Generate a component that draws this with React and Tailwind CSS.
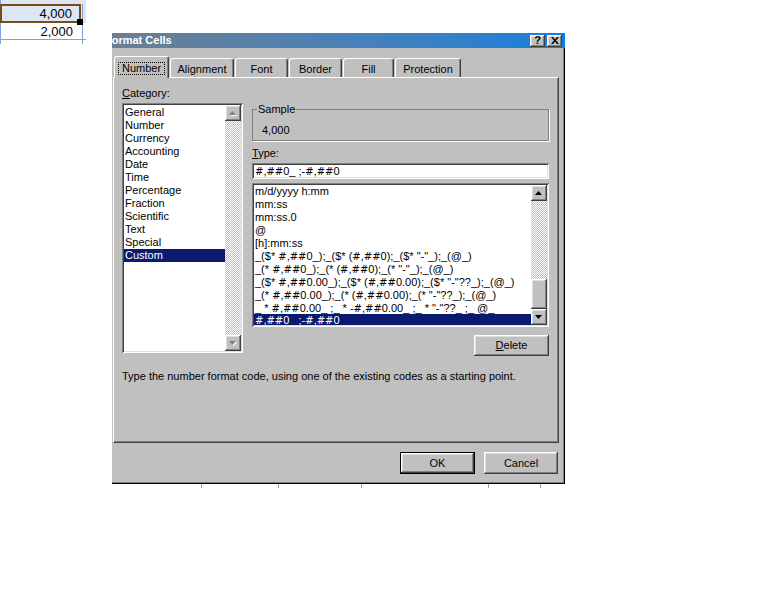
import React from "react";

const raised =
  "shadow-[inset_-1px_-1px_#404040,inset_1px_1px_#ffffff,inset_-2px_-2px_#808080,inset_2px_2px_#dfdfdf]";
const sunken =
  "shadow-[inset_1px_1px_#808080,inset_-1px_-1px_#ffffff,inset_2px_2px_#404040,inset_-2px_-2px_#dfdfdf]";
const dither =
  "bg-[image:repeating-conic-gradient(#c0c0c0_0_25%,#ffffff_0_50%)] bg-[length:2px_2px]";

const categories = [
  "General",
  "Number",
  "Currency",
  "Accounting",
  "Date",
  "Time",
  "Percentage",
  "Fraction",
  "Scientific",
  "Text",
  "Special",
  "Custom",
];

const formats = [
  "m/d/yyyy h:mm",
  "mm:ss",
  "mm:ss.0",
  "@",
  "[h]:mm:ss",
  '_($* #,##0_);_($* (#,##0);_($* "-"_);_(@_)',
  '_(* #,##0_);_(* (#,##0);_(* "-"_);_(@_)',
  '_($* #,##0.00_);_($* (#,##0.00);_($* "-"??_);_(@_)',
  '_(* #,##0.00_);_(* (#,##0.00);_(* "-"??_);_(@_)',
  '_ * #,##0.00_ ;_ * -#,##0.00_ ;_ * "-"??_ ;_ @_ ',
  "#,##0_ ;-#,##0",
];

// the # sign is narrow in Liberation Sans, the dialog font draws it wider
function Code({ text }) {
  const parts = text.split("#");
  return (
    <>
      {parts.map((p, i) => (
        <React.Fragment key={i}>
          {p}
          {i < parts.length - 1 && <span className="font-['DejaVu_Sans'] text-[10px]">#</span>}
        </React.Fragment>
      ))}
    </>
  );
}

function ArrowBtn({ up, disabled }) {
  return (
    <div className={`w-[16px] h-[16px] bg-[#c0c0c0] flex items-center justify-center ${raised}`}>
      <svg width="8" height="5" viewBox="0 0 8 5">
        {disabled && (
          <polygon points={up ? "4.5,1 8,5 1,5" : "1,1 8,1 4.5,5"} fill="#ffffff" />
        )}
        <polygon points={up ? "3.5,0 7,4 0,4" : "0,0 7,0 3.5,4"} fill={disabled ? "#808080" : "#000000"} />
      </svg>
    </div>
  );
}

function Tab({ label, w, active }) {
  return (
    <div
      className={`ml-[1px] first:ml-0 flex justify-center bg-[#c0c0c0] border-l border-t border-white border-r border-r-[#404040] rounded-t-[3px] shadow-[inset_-1px_0_#808080] ${
        active ? "relative z-10 h-[22px] -mb-[1px] pt-[5px]" : "h-[19px] pt-[4px]"
      }`}
      style={{ width: w }}
    >
      {active ? (
        <span className="h-[13px] border border-dotted border-black px-[3px] flex items-center">{label}</span>
      ) : (
        <span>{label}</span>
      )}
    </div>
  );
}

function Sheet() {
  return (
    <div className="w-[86px] font-['Liberation_Sans',Arial,sans-serif] text-[13px] leading-[15px]">
      <div className="h-[4px] bg-[#dce6f4] border-l border-[#7ea3d8]" />
      <div className="flex h-[19px] bg-[#dce6f4]">
        <div className="relative w-[81px] border-2 border-[#7a4c16] flex items-end justify-end pr-[7px]">
          4,000
          <span className="absolute -right-[4px] -bottom-[4px] w-[6px] h-[6px] bg-black" />
        </div>
        <div className="w-[1px] ml-[1px] bg-[#7ea3d8]" />
      </div>
      <div className="flex h-[17px] border-b border-[#7ea3d8]">
        <div className="w-[82px] border-l border-[#7ea3d8] flex justify-end pr-[9px] pt-[1px]">2,000</div>
        <div className="w-[1px] bg-[#7ea3d8]" />
      </div>
      <div className="flex h-[4px]">
        <div className="w-[82px] border-l border-[#7ea3d8]" />
        <div className="w-[1px] bg-[#7ea3d8]" />
      </div>
    </div>
  );
}

function Dialog() {
  return (
    <div className="absolute left-[112px] top-[33px] w-[453px] h-[451px] bg-[#c0c0c0] flex flex-col shadow-[inset_-1px_-1px_#000000,inset_-2px_-2px_#808080]">
      {/* Title bar */}
      <div className="h-[15px] flex items-center overflow-hidden bg-linear-to-r from-[#6a7f91] to-[#0d7fdc]">
        <span className="-ml-[7px] font-bold text-white whitespace-nowrap">Format Cells</span>
        <div className="ml-auto mr-[3px] flex gap-[2px]">
          <div className={`w-[15px] h-[12px] bg-[#c0c0c0] flex items-center justify-center font-bold text-[11px] leading-[11px] ${raised}`}>
            ?
          </div>
          <div className={`w-[15px] h-[12px] bg-[#c0c0c0] flex items-center justify-center ${raised}`}>
            <svg width="8" height="7" viewBox="0 0 8 7">
              <path d="M0 0h2l2 2.5L6 0h2L5 3.5 8 7H6L4 4.5 2 7H0l3-3.5z" fill="#000" />
            </svg>
          </div>
        </div>
      </div>

      {/* Tabs */}
      <div className="mt-[8px] pl-[2px] h-[21px] flex items-end">
        <Tab label="Number" w={55} active />
        <Tab label="Alignment" w={64} />
        <Tab label="Font" w={53} />
        <Tab label="Border" w={53} />
        <Tab label="Fill" w={51} />
        <Tab label="Protection" w={66} />
      </div>

      {/* Panel */}
      <div className="ml-[1px] w-[446px] h-[366px] border-t border-l border-white border-r border-b border-r-[#404040] border-b-[#404040] shadow-[inset_-1px_-1px_#808080] px-[8px] pt-[9px]">
        <div className="flex">
          {/* Category column */}
          <div className="w-[121px] flex flex-col">
            <div>
              <span className="underline">C</span>ategory:
            </div>
            <div className={`mt-[3px] h-[250px] bg-white p-[2px] flex ${sunken}`}>
              <div className="flex-1 pt-[1px]">
                {categories.map((c) => (
                  <div
                    key={c}
                    className={`h-[13px] pl-[1px] ${c === "Custom" ? "bg-[#0a1a6e] text-white" : ""}`}
                  >
                    {c}
                  </div>
                ))}
              </div>
              <div className="w-[16px] flex flex-col">
                <ArrowBtn up disabled />
                <div className={`flex-1 ${dither}`} />
                <ArrowBtn disabled />
              </div>
            </div>
          </div>

          {/* Right column */}
          <div className="ml-[9px] w-[297px] flex flex-col">
            <fieldset className="mt-[16px] border border-[#808080] shadow-[1px_1px_#ffffff] pb-[3px]">
              <legend className="ml-[4px] px-[1px]">Sample</legend>
              <div className="pl-[9px] pt-[8px]">4,000</div>
            </fieldset>
            <div className="mt-[6px]">
              <span className="underline">T</span>ype:
            </div>
            <div className={`mt-[3px] h-[16px] bg-white flex items-center pl-[3px] whitespace-pre ${sunken}`}>
              <Code text="#,##0_ ;-#,##0" />
            </div>
            <div className={`mt-[4px] h-[144px] bg-white p-[2px] flex ${sunken}`}>
              <div className="flex-1 overflow-hidden">
                {formats.map((f, i) => (
                  <div
                    key={i}
                    className={`pl-[1px] whitespace-pre overflow-hidden ${
                      i === formats.length - 1
                        ? "h-[13px] bg-[#0a1a6e] text-white"
                        : i === formats.length - 2
                        ? "h-[12px]"
                        : "h-[13px]"
                    }`}
                  >
                    <Code text={f} />
                  </div>
                ))}
              </div>
              <div className="w-[16px] flex flex-col">
                <ArrowBtn up />
                <div className={`flex-1 ${dither}`} />
                <div className={`h-[30px] bg-[#c0c0c0] ${raised}`} />
                <ArrowBtn />
              </div>
            </div>
            <div className="mt-[8px] flex justify-end">
              <div className={`w-[75px] h-[21px] bg-[#c0c0c0] flex items-center justify-center ${raised}`}>
                <span>
                  <span className="underline">D</span>elete
                </span>
              </div>
            </div>
          </div>
        </div>
        <div className="mt-[14px] whitespace-nowrap">
          Type the number format code, using one of the existing codes as a starting point.
        </div>
      </div>

      {/* Buttons */}
      <div className="mt-[9px] pr-[7px] flex justify-end gap-[9px]">
        <div className="w-[75px] h-[22px] border border-black">
          <div className={`w-full h-full bg-[#c0c0c0] flex items-center justify-center ${raised}`}>OK</div>
        </div>
        <div className={`w-[74px] h-[22px] bg-[#c0c0c0] flex items-center justify-center ${raised}`}>Cancel</div>
      </div>
    </div>
  );
}

export default function App() {
  return (
    <div className="relative w-[768px] h-[614px] bg-white overflow-hidden font-['Tahoma','Liberation_Sans',Arial,sans-serif] text-[11px] leading-[13px] text-black">
      <Sheet />
      <Dialog />
      {/* grid lines of the sheet peeking out under the dialog */}
      <span className="absolute top-[484px] left-[201px] w-[1px] h-[4px] bg-[#7ea3d8]" />
      <span className="absolute top-[484px] left-[278px] w-[1px] h-[4px] bg-[#7ea3d8]" />
      <span className="absolute top-[484px] left-[361px] w-[1px] h-[4px] bg-[#7ea3d8]" />
      <span className="absolute top-[484px] left-[488px] w-[1px] h-[4px] bg-[#7ea3d8]" />
      <span className="absolute top-[484px] left-[540px] w-[1px] h-[4px] bg-[#7ea3d8]" />
    </div>
  );
}
